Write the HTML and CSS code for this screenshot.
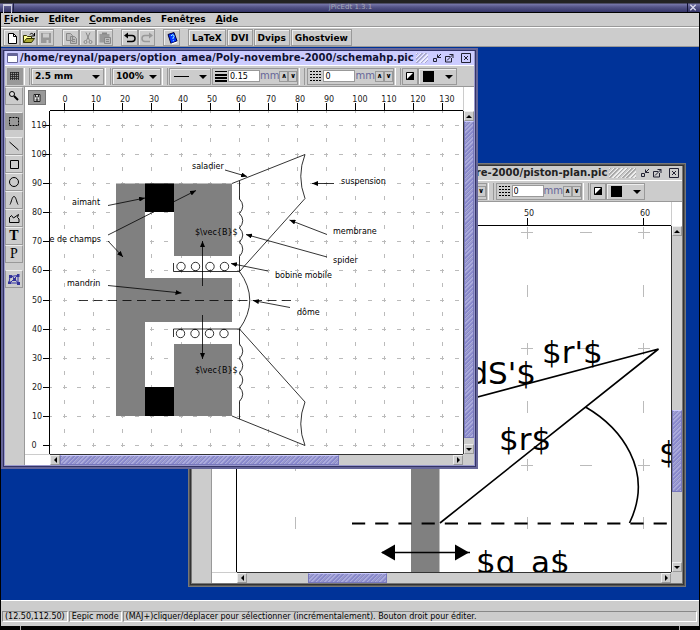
FILE: index.html
```html
<!DOCTYPE html>
<html lang="fr">
<head>
<meta charset="utf-8">
<title>jPicEdt 1.3.1</title>
<link rel="stylesheet" href="styles.css">
</head>
<body>
<svg class="defs" aria-hidden="true">
  <defs>
    <symbol id="i-iconify" viewBox="0 0 10 10"><path d="M1.500 5.500h3v3h-3zM9 1L5.500 4.500M5.500 1.500v3h3.500" /></symbol>
    <symbol id="i-maximize" viewBox="0 0 10 10"><path d="M6 3.500H1.500v5.500h6V5M3 7.500L9 1.500M5.500 1.500H9V5" /></symbol>
    <symbol id="i-close" viewBox="0 0 10 10"><path d="M.5.5h9v9h-9zM3 3l4 4M7 3L3 7" /></symbol>
    <symbol id="i-bw" viewBox="0 0 10 10"><path d="M1.500 1.500h7v7h-7z" fill="#fff" stroke="#000"/><path d="M9 1v8H1z" fill="#000" stroke="none"/></symbol>
    <symbol id="i-dashes" viewBox="0 0 12 12"><path d="M0 1.500h12M0 4.500h12M0 7.500h12M0 10.500h12" stroke="#000" stroke-dasharray="2 1"/></symbol>
    <marker id="head" viewBox="0 0 6 5" markerWidth="6" markerHeight="5" refX="6" refY="2.500" orient="auto" markerUnits="userSpaceOnUse"><path d="M0 0L6 2.500L0 5z"/></marker>
  </defs>
</svg>

<header class="app-title">
  <button class="app-menu" aria-label="Menu système"></button>
  <h1>jPicEdt 1.3.1</h1>
  <button class="app-close" aria-label="Fermer"><svg viewBox="0 0 10 10"><path d="M2 2l6 6M8 2L2 8"/></svg></button>
</header>

<div class="app">
  <nav class="menubar">
    <a href="#"><u>F</u>ichier</a><a href="#"><u>E</u>diter</a><a href="#"><u>C</u>ommandes</a><a href="#">Fenêt<u>r</u>es</a><a href="#"><u>A</u>ide</a>
  </nav>
  <div class="toolbar">
    <div class="group">
      <button aria-label="Nouveau"><svg viewBox="0 0 14 14"><path d="M3.500 2.500h5l3 3v7h-8z" fill="#fff" stroke="#000"/><path d="M8.500 2.500v3h3" fill="none" stroke="#000"/></svg></button>
      <button aria-label="Ouvrir"><svg viewBox="0 0 14 14"><path d="M1.500 11.500v-7h3l1 1h4v2" fill="#ff9" stroke="#330"/><path d="M1.500 11.500l3-4h8l-3 4z" fill="#aa3" stroke="#330"/><path d="M8 3.500c1-2 3-1 4 1M12.500 2v3h-3" fill="none" stroke="#000"/></svg></button>
      <button disabled aria-label="Enregistrer"><svg viewBox="0 0 14 14"><path d="M2 2h10v10H2z" fill="#999"/><path d="M4 2.500h6v4H4z" fill="#ccc"/><path d="M7.500 9h2v3h-2z" fill="#ccc"/></svg></button>
    </div>
    <div class="group">
      <button disabled aria-label="Copier"><svg viewBox="0 0 14 14"><path d="M2.500 2.500h4l2 2v5h-6zM6.500 5.500h4l2 2v5h-6z" fill="#bbb" stroke="#888"/><path d="M8 8.500h3M8 10.500h3" stroke="#888"/></svg></button>
      <button disabled aria-label="Couper"><svg viewBox="0 0 14 14"><path d="M5 1.500l3.500 8M9 1.500l-3.500 8" fill="none" stroke="#888"/><circle cx="4.500" cy="11" r="1.500" fill="none" stroke="#888"/><circle cx="9.500" cy="11" r="1.500" fill="none" stroke="#888"/></svg></button>
      <button disabled aria-label="Coller"><svg viewBox="0 0 14 14"><path d="M1.500 3h10v8.500h-10z" fill="#999"/><path d="M4 1.500h5v2H4z" fill="#888"/><path d="M6.500 6.500h6v6h-6z" fill="#bbb" stroke="#888"/><path d="M8 8.500h3M8 10.500h3" stroke="#888"/></svg></button>
    </div>
    <div class="group">
      <button aria-label="Annuler"><svg viewBox="0 0 14 14"><path d="M3 4.500h6q3 0 3 3t-3 3H4" fill="none" stroke="#000" stroke-width="1.500"/><path d="M1 4.500l4-3v6z"/></svg></button>
      <button disabled aria-label="Rétablir"><svg viewBox="0 0 14 14"><path d="M11 4.500H5q-3 0-3 3t3 3h5" fill="none" stroke="#999" stroke-width="1.500"/><path d="M13 4.500l-4-3v6z" fill="#999"/></svg></button>
    </div>
    <div class="group">
      <button aria-label="Aide"><svg viewBox="0 0 14 14"><path d="M3 3.500l6-2 3 8.500-6 2.500z" fill="#03f" stroke="#003"/><path d="M6 12.500l6-2v1.500l-5 1.500z" fill="#fff"/><path d="M6 5q1-2 2.500-1t-.5 3v1M8.300 9.200v1" fill="none" stroke="#9ff"/></svg></button>
    </div>
    <div class="group words">
      <button>LaTeX</button><button>DVI</button><button>Dvips</button><button>Ghostview</button>
    </div>
  </div>

  <main class="desktop">
    <section class="window piston">
      <header class="titlebar">
        <span class="doc"></span><h2>/home/reynal/papers/option_amea/Poly-novembre-2000/piston-plan.pic</h2><span class="grip"></span>
        <button aria-label="Réduire"><svg><use href="#i-iconify"/></svg></button><button aria-label="Agrandir"><svg><use href="#i-maximize"/></svg></button><button class="last" aria-label="Fermer"><svg><use href="#i-close"/></svg></button>
      </header>
      <div class="attributes">
        <label class="field"><span class="lines"></span><input type="text" value="0.15" aria-label="Épaisseur">mm<button class="spin">∧</button><button class="spin">∨</button></label>
        <i class="bar"></i>
        <label class="field"><svg class="dash"><use href="#i-dashes"/></svg><input type="text" value="0" aria-label="Pointillé">mm<button class="spin">∧</button><button class="spin">∨</button></label>
        <i class="bar"></i>
        <button class="fill" aria-label="Remplissage"><svg><use href="#i-bw"/></svg></button>
        <div class="combo color"><span class="swatch"></span><select aria-label="Couleur"><option></option></select></div>
      </div>
      <div class="body">
        <div class="palette"></div>
        <div class="corner"></div>
        <svg class="ruler top"><g transform="translate(-237 -202)"><path d="M527.500 218v8M643.500 218v8M411.500 218v8"/><text x="529" y="216">50</text><text x="645" y="216">60</text></g></svg>
        <div class="edge"></div>
        <svg class="ruler side"></svg>
        <svg class="canvas">
          <g transform="translate(-237 -226)">
            <g class="grid large">
              <path stroke-dashoffset="7.100" d="M238 232.500H700M238 348.500H700M238 465.500H700"/>
              <path stroke-dashoffset="57.600" d="M295.500 226V580M411.500 226V580M527.500 226V580M643.500 226V580"/>
            </g>
            <rect x="411" y="226" width="28.500" height="400" fill="#808080"/>
            <g fill="none" stroke="#000" stroke-width="1.600">
              <path d="M352 523.500H668" stroke-width="2" stroke-dasharray="13.200 10"/>
              <path d="M440 523L658.500 349L440 407M585.500 407C620 427 655 470 629.500 523M382 552.500H470"/>
            </g>
            <path d="M381 552.500l14-8v16zM469 552.500l-14-8v16z"/>
            <g class="big">
              <text x="542" y="363">$r'$</text><text x="536" y="384" text-anchor="end">$dS'$</text><text x="499" y="450">$r$</text><text x="659" y="463">$</text><text x="476" y="573">$q_a$</text>
            </g>
          </g>
        </svg>
        <div class="vscroll"><button class="arrow up" aria-label="Haut"></button><i class="track v1"></i><i class="thumb v2"></i><i class="track v3"></i><button class="arrow down" aria-label="Bas"></button></div>
        <div class="foot"></div>
        <div class="hscroll"><button class="arrow left" aria-label="Gauche"></button><i class="track h1"></i><i class="thumb h2"></i><i class="track h3"></i><button class="arrow right" aria-label="Droite"></button></div>
        <div class="nook"></div>
      </div>
    </section>

    <section class="window active">
      <header class="titlebar">
        <span class="doc"></span><h2>/home/reynal/papers/option_amea/Poly-novembre-2000/schemahp.pic</h2><span class="grip"></span>
        <button aria-label="Réduire"><svg><use href="#i-iconify"/></svg></button><button aria-label="Agrandir"><svg><use href="#i-maximize"/></svg></button><button class="last" aria-label="Fermer"><svg><use href="#i-close"/></svg></button>
      </header>
      <div class="attributes">
        <button class="fill on" aria-label="Grille"><svg viewBox="0 0 10 10"><path d="M.5 1v8M2.500 1v8M4.500 1v8M6.500 1v8M8.500 1v8M0 1.500h9M0 3.500h9M0 5.500h9M0 7.500h9" stroke="#222" stroke-width=".8"/></svg></button>
        <i class="bar"></i>
        <div class="combo step"><select aria-label="Pas de grille"><option>2.5 mm</option></select></div>
        <i class="bar"></i>
        <div class="combo zoom"><select aria-label="Zoom"><option>100%</option></select></div>
        <i class="bar"></i>
        <div class="combo style"><span class="dashline"></span><select aria-label="Style de trait"><option></option></select></div>
        <label class="field"><span class="lines"></span><input type="text" value="0.15" aria-label="Épaisseur">mm<button class="spin">∧</button><button class="spin">∨</button></label>
        <i class="bar"></i>
        <label class="field"><svg class="dash"><use href="#i-dashes"/></svg><input type="text" value="0" aria-label="Pointillé">mm<button class="spin">∧</button><button class="spin">∨</button></label>
        <i class="bar"></i>
        <button class="fill" aria-label="Remplissage"><svg><use href="#i-bw"/></svg></button>
        <div class="combo color"><span class="swatch"></span><select aria-label="Couleur"><option></option></select></div>
      </div>
      <div class="body">
        <div class="palette">
          <button aria-label="Loupe"><svg viewBox="0 0 14 14"><circle cx="5" cy="5" r="2.500" fill="#ddd" stroke="#000"/><path d="M7 7l4 4" stroke="#000" stroke-width="2"/></svg></button>
          <i></i>
          <button class="on" aria-label="Sélection"><svg viewBox="0 0 14 14"><path d="M2.500 3.500h9v8h-9z" fill="none" stroke="#000" stroke-dasharray="2 1"/></svg></button>
          <i></i>
          <button aria-label="Ligne"><svg viewBox="0 0 14 14"><path d="M2.500 3l9 8" stroke="#000"/></svg></button>
          <button aria-label="Rectangle"><svg viewBox="0 0 14 14"><path d="M3.500 3.500h8v8h-8z" fill="none" stroke="#000"/></svg></button>
          <button aria-label="Cercle"><svg viewBox="0 0 14 14"><circle cx="7" cy="7" r="4.500" fill="none" stroke="#000"/></svg></button>
          <button aria-label="Courbe"><svg viewBox="0 0 14 14"><path d="M3 11.500C4.500 9 5 3.500 7 3.500S9.500 9 11 11.500" fill="none" stroke="#000"/></svg></button>
          <button aria-label="Polygone"><svg viewBox="0 0 14 14"><path d="M2.500 11.500v-5l2-2 2 2.500 5-3.500-1 3 1.500 1.500v3.500z" fill="none" stroke="#000"/></svg></button>
          <button class="serif bold">T</button>
          <button class="serif">P</button>
          <i></i>
          <button aria-label="Points"><svg viewBox="0 0 14 14"><path d="M3 4.500l8-1v7.500l-9 0zM5 4l7 8M10 4l-6 6" fill="none" stroke="#33a"/><path d="M2 3h3v3H2zM10 2h2.500v3H10zM1 9.500h3v2.500H1zM10 10h3v3h-3zM6 6h3v3H6z" fill="#339"/></svg></button>
        </div>
        <div class="corner"><button aria-label="Origine"><svg viewBox="0 0 10 10"><path d="M2 1.500h6v7H2z" fill="#eee" stroke="#222"/><path d="M3.500 1v3h3V1M5 5v3M3.500 7h3" fill="none" stroke="#222"/></svg></button></div>
        <svg class="ruler top"><g transform="translate(-50 -87)">
          <path d="M64.500 103v8M93.500 103v8M122.500 103v8M151.500 103v8M181.500 103v8M210.500 103v8M239.500 103v8M268.500 103v8M297.500 103v8M326.500 103v8M355.500 103v8M384.500 103v8M413.500 103v8M442.500 103v8"/>
          <text x="65" y="102">0</text><text x="96" y="102">10</text><text x="125" y="102">20</text><text x="154" y="102">30</text><text x="183" y="102">40</text><text x="212" y="102">50</text><text x="241" y="102">60</text><text x="271" y="102">70</text><text x="300" y="102">80</text><text x="329" y="102">90</text><text x="360" y="102">100</text><text x="389" y="102">110</text><text x="418" y="102">120</text><text x="447" y="102">130</text>
        </g></svg>
        <div class="edge"></div>
        <svg class="ruler side"><g transform="translate(-25 -111)">
          <path d="M43 125.500h7M43 154.500h7M43 183.500h7M43 212.500h7M43 241.500h7M43 270.500h7M43 300.500h7M43 329.500h7M43 358.500h7M43 387.500h7M43 416.500h7M43 445.500h7"/>
          <text x="39" y="128">110</text><text x="39" y="157">100</text><text x="37" y="186">90</text><text x="37" y="215">80</text><text x="37" y="244">70</text><text x="37" y="273">60</text><text x="37" y="303">50</text><text x="37" y="332">40</text><text x="37" y="361">30</text><text x="37" y="390">20</text><text x="37" y="419">10</text><text x="34" y="448">0</text>
        </g></svg>
        <svg class="canvas">
          <g transform="translate(-50 -111)">
            <g class="grid small">
              <path d="M50 125.500H470M50 154.500H470M50 183.500H470M50 212.500H470M50 241.500H470M50 270.500H470M50 300.500H470M50 329.500H470M50 358.500H470M50 387.500H470M50 416.500H470M50 445.500H470"/>
              <path d="M64.500 111V460M93.500 111V460M122.500 111V460M151.500 111V460M181.500 111V460M210.500 111V460M239.500 111V460M268.500 111V460M297.500 111V460M326.500 111V460M355.500 111V460M384.500 111V460M413.500 111V460M442.500 111V460"/>
            </g>
            <path d="M116 183.500H232V256H174V212H145V278H232V322H145V387H174V344H232V416H116z" fill="#808080"/>
            <path d="M145 183.500h29V212h-29zM145 387h29v29h-29z"/>
            <g fill="none" stroke="#000" stroke-width=".8">
              <path d="M173.500 263v8.500H239.500M173.500 337v-8H239.500"/>
              <circle cx="181" cy="266.500" r="4.200"/><circle cx="195.500" cy="266.500" r="4.200"/><circle cx="210" cy="266.500" r="4.200"/><circle cx="224.500" cy="266.500" r="4.200"/>
              <circle cx="180.500" cy="333.500" r="4.200"/><circle cx="195" cy="333.500" r="4.200"/><circle cx="209.500" cy="333.500" r="4.200"/><circle cx="224" cy="333.500" r="4.200"/>
              <path d="M239.500 181V199q6.500 7 0 14.500q6.500 7 0 14.500q6.500 7 0 14q6.500 7 0 14.500V271.500Q260 300 239.500 329V344q6.500 7 0 14.500q6.500 7 0 14.500q6.500 7 0 14q6.500 7 0 14.500V419"/>
              <path d="M232 183.500L305 154.500Q296.500 176 305 198.500L239.500 271.500M239.500 329L305 402Q296.500 424 305 445.500L232 416"/>
              <path d="M79 300.500H291" stroke-dasharray="9 5.500"/>
            </g>
            <g class="arrows">
              <path d="M202.500 286V241"/><path d="M202.500 315V359"/><path d="M108 205.500L145 198"/><path d="M108 235L196 190.500"/><path d="M108 241L123 257"/><path d="M108 285.500L181.500 293"/><path d="M225 170L247 176.500"/><path d="M334 183.500H312"/><path d="M327 234.500L289.500 220"/><path d="M327 257L246 234.500"/><path d="M268 271L231 263.500"/><path d="M290 307.500L253 300.500"/>
            </g>
            <g class="labels">
              <text x="192" y="169">saladier</text><text x="341" y="184">suspension</text><text x="333" y="234">membrane</text><text x="333" y="263">spider</text><text x="275" y="278">bobine mobile</text><text x="297" y="315">dôme</text><text x="72" y="205">aimant</text><text x="101" y="242" text-anchor="end">e de champs</text><text x="67" y="286">mandrin</text><text x="195" y="235">$\vec{B}$</text><text x="195" y="373">$\vec{B}$</text>
            </g>
          </g>
        </svg>
        <div class="vscroll"><button class="arrow up" aria-label="Haut"></button><i class="thumb v1"></i><i class="track v2"></i><button class="arrow down" aria-label="Bas"></button></div>
        <div class="foot"></div>
        <div class="hscroll"><button class="arrow left" aria-label="Gauche"></button><i class="thumb h1"></i><i class="track h2"></i><button class="arrow right" aria-label="Droite"></button></div>
        <div class="nook"></div>
      </div>
    </section>
  </main>

  <footer class="status">
    <span>(12.50,112.50)</span><span>Eepic mode</span><span class="hint">(MAJ+)cliquer/déplacer pour sélectionner (incrémentalement). Bouton droit pour éditer.</span>
  </footer>
</div>
<div class="handle"><i></i><i></i></div>
</body>
</html>
```
FILE: styles.css
```css
* { box-sizing: border-box; }
html, body { height: 100%; }
body {
  margin: 0;
  display: flex;
  flex-direction: column;
  background: #000;
  color: #000;
  font: bold 9px/12px "DejaVu Sans", sans-serif;
  overflow: hidden;
}
button, input, select { font: inherit; color: inherit; margin: 0; padding: 0; border: 0; border-radius: 0; background: none; }
h1, h2 { margin: 0; font: inherit; }
svg { display: block; }
.defs { position: absolute; width: 0; height: 0; }

.app-title {
  display: flex;
  align-items: stretch;
  height: 13px;
  padding: 3px 1px 1px 2px;
  background: linear-gradient(#222 0 3px, #77a 4px, #558 7px, #336 12px, #000 12px);
}
.app-title h1 { flex: 1; text-align: center; font: 7px/8px "DejaVu Sans", sans-serif; color: #aab; }
.app-menu { width: 12px; border-right: 1px solid #224; display: flex; padding: 1px 1px; }
.app-menu::before { content: ""; width: 8px; height: 7px; border: 1px solid #ccd; border-top-width: 2px; }
.app-close { width: 12px; border-left: 1px solid #113; }
.app-close svg { width: 10px; height: 9px; fill: none; stroke: #dde; stroke-width: 1.4; }

.app { flex: 1; min-height: 0; display: flex; flex-direction: column; margin: 0 1px; background: #ccc; }
.menubar { display: flex; gap: 10px; height: 14px; padding: 0 3px; border-bottom: 1px solid #999; }
.menubar a { color: #000; text-decoration: none; }
.toolbar { display: flex; gap: 8px; height: 20px; padding: 1px 2px; border-top: 1px solid #fff; border-bottom: 1px solid #999; }
.group { display: flex; }
.group button { width: 17px; height: 17px; border: 1px solid #999; box-shadow: inset 1px 1px #eee; display: grid; place-items: center; }
.group svg { width: 14px; height: 14px; }
.group.words button { width: auto; padding: 0 3px; margin-right: 1px; }

.desktop { flex: 1; min-height: 0; position: relative; overflow: hidden; background: #039; }
.window {
  position: absolute;
  left: 0;
  top: 1px;
  width: 477px;
  height: 421px;
  display: flex;
  flex-direction: column;
  padding: 2px 3px 3px;
  background: #ccc;
  border: 1px solid #777;
  box-shadow: inset 0 0 0 1px #555, inset 0 0 0 2px #333, inset 0 0 0 3px #777;
}
.window.active { border-color: #669; box-shadow: inset 0 0 0 1px #669, inset 0 0 0 2px #336, inset 0 0 0 3px #99c; }
.piston { left: 187px; top: 116px; width: 498px; height: 424px; }

.titlebar { display: flex; align-items: center; height: 14px; padding: 0 3px 0 2px; background: #ccc; color: #222; }
.active .titlebar { background: #ccf; color: #113; }
.titlebar h2 { white-space: nowrap; font-size: 10px; }
.doc { width: 11px; height: 10px; margin-right: 2px; flex: none; background: #fff; border: 1px solid #669; border-top-width: 3px; border-radius: 1px; }
.grip { flex: 1; height: 10px; margin: 0 4px 0 2px; background: repeating-linear-gradient(135deg, #eee 0 1px, #aaa 1px 2px, #ccc 2px 3px); }
.active .grip { background: repeating-linear-gradient(135deg, #eef 0 1px, #aac 1px 2px, #ccf 2px 3px); }
.titlebar button { width: 10px; margin-right: 2px; flex: none; }
.titlebar .last { margin: 0 0 0 5px; }
.titlebar svg { width: 10px; height: 10px; fill: none; stroke: #223; }

.attributes { display: flex; align-items: center; height: 22px; padding: 1px 2px; border-top: 1px solid #fff; border-bottom: 1px solid #999; }
.bar { width: 6px; height: 17px; margin: 0 1px; border-left: 1px solid #fff; border-right: 1px solid #999; }
.fill { width: 16px; height: 17px; border: 1px solid #999; display: grid; place-items: center; }
.fill svg { width: 10px; height: 10px; fill: none; }
.on { background: #999; }
.combo { position: relative; display: flex; align-items: center; height: 17px; border: 1px solid #999; box-shadow: inset 1px 1px #eee; }
.combo select { appearance: none; width: 100%; height: 15px; padding-left: 3px; outline: 0; }
.combo::after { content: ""; position: absolute; right: 3px; top: 6px; border: 4px solid transparent; border-top-color: #000; border-bottom: 0; }
.step { width: 73px; }
.zoom { width: 49px; }
.style { width: 42px; }
.color { width: 39px; }
.swatch { flex: none; width: 11px; height: 11px; margin-left: 4px; background: #000; }
.dashline { flex: none; width: 15px; height: 1px; margin-left: 4px; background: #000; }
.field { display: flex; align-items: center; height: 17px; margin-left: 1px; padding-left: 2px; border: 1px solid #999; color: #669; font-weight: normal; font-size: 10px; }
.lines { width: 12px; height: 11px; background: linear-gradient(#000 0 1px, transparent 1px 3px, #000 3px 5px, transparent 5px 6px, #000 6px 8px, transparent 8px 9px, #000 9px); }
.dash { width: 12px; height: 12px; }
.field input { width: 32px; height: 12px; margin-left: 1px; padding-left: 1px; background: #fff; border: 1px solid #999; color: #000; font: 8px/10px "DejaVu Sans", sans-serif; }
.spin { width: 9px; height: 11px; border: 1px solid #999; color: #000; font: bold 7px/8px "DejaVu Sans", sans-serif; text-align: center; }

.body { flex: 1; min-height: 0; display: grid; grid-template: 24px minmax(0, 1fr) 11px / 20px 25px minmax(0, 1fr) 11px; }
.palette { grid-row: 1 / 4; display: flex; flex-direction: column; border-right: 1px solid #999; }
.palette button { height: 18px; width: 18px; border: 1px solid #999; border-top-color: #eee; display: grid; place-items: center; }
.palette i { height: 7px; }
.palette svg { width: 14px; height: 14px; }
.serif { font: 14px/14px "Liberation Serif", serif; }
.serif.bold { font-weight: bold; }
.corner { background: #fff; padding: 3px; }
.corner button { width: 18px; height: 15px; background: #999; border: 1px solid #777; display: grid; place-items: center; }
.corner svg { width: 10px; height: 10px; }
.ruler { width: 100%; height: 100%; background: #fff; overflow: hidden; }
.ruler path { stroke: #000; fill: none; shape-rendering: crispEdges; }
.ruler text { font: 8px "DejaVu Sans", sans-serif; text-anchor: middle; fill: #222; }
.top { border-bottom: 1px solid #000; }
.side { border-right: 1px solid #000; }
.edge { background: #fff; border-left: 1px solid #ccc; }
.canvas { width: 100%; height: 100%; background: #fff; overflow: hidden; }
.grid { fill: none; shape-rendering: crispEdges; }
.small { stroke: #bbb; stroke-dasharray: 4 10.535; stroke-dashoffset: 2.035; }
.large { stroke: #bbb; stroke-dasharray: 12 46.1; }
.labels { font: 8px "DejaVu Sans", sans-serif; }
.big { font: 31px "DejaVu Sans", sans-serif; }
.arrows path { stroke: #000; stroke-width: .8; marker-end: url(#head); }
.foot { background: #fff; border-top: 1px solid #ccc; }
.nook { background: #ccc; }

.vscroll, .hscroll { display: flex; background: #ccc; }
.vscroll { flex-direction: column; border-left: 1px solid #333; }
.hscroll { border-top: 1px solid #333; }
.arrow { flex: none; width: 10px; height: 10px; display: grid; place-items: center; border: 1px solid #999; border-top-color: #eee; border-left-color: #eee; }
.arrow::before { content: ""; border: 3px solid transparent; }
.up::before { border-bottom-color: #000; border-top: 0; }
.down::before { border-top-color: #000; border-bottom: 0; }
.left::before { border-right-color: #000; border-left: 0; }
.right::before { border-left-color: #000; border-right: 0; }
.thumb { background: repeating-linear-gradient(135deg, #88c 0 1px, #aad 1px 2px, #99c 2px 3px); border: 1px solid #77b; border-top-color: #ccf; }
.active .v1 { flex: 318; }
.active .v2 { flex: 6; }
.active .h1 { flex: 278; }
.active .h2 { flex: 114; }
.piston .v1 { flex: 175; }
.piston .v2 { flex: 81; }
.piston .v3 { flex: 70; }
.piston .h1 { flex: 61; }
.piston .h2 { flex: 77; }
.piston .h3 { flex: 274; }
.piston .attributes { justify-content: flex-end; padding-right: 37px; }

.status { display: flex; height: 26px; padding: 10px 1px 4px; border-top: 1px solid #fff; font: 8px/10px "DejaVu Sans", sans-serif; }
.status span { white-space: nowrap; border: 1px solid; border-color: #888 #fff #fff #888; padding: 0 2px; line-height: 9px; margin-right: 1px; }
.status .hint { flex: 1; min-width: 0; }
.handle { display: flex; justify-content: space-between; height: 4px; padding: 0 20px; }
.handle i { width: 1px; background: #aaa; }
```
